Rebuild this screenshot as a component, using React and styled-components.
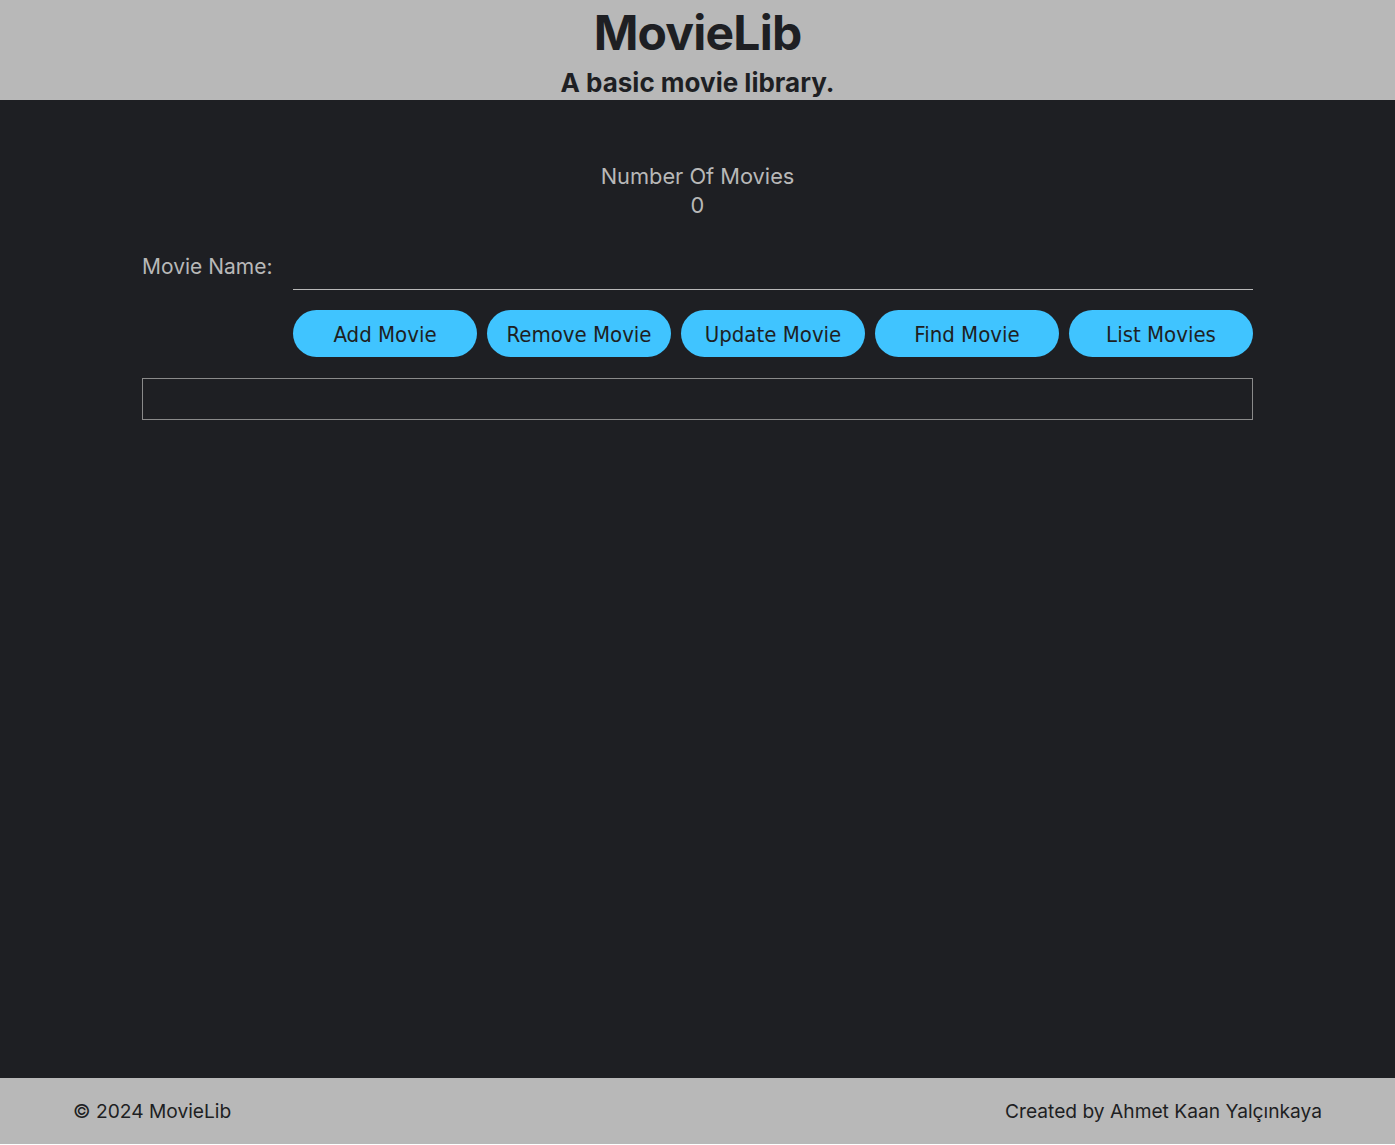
import React from "react";
import styled, { createGlobalStyle } from "styled-components";

const Global = createGlobalStyle`
  html, body { margin: 0; padding: 0; background: #ffffff; }
  body {
    font-family: Inter, "Noto Sans", sans-serif;
  }
  #root { min-height: 1144px; display: flex; flex-direction: column; }
`;

const Header = styled.header`
  background: #b8b8b8;
  height: 100px;
  display: flex;
  flex-direction: column;
  align-items: center;
  color: #1e1f23;
`;

const Title = styled.h1`
  margin: 5px 0 0;
  font-size: 48px;
  line-height: 56px;
  font-weight: 700;
  letter-spacing: -0.8px;
`;

const Subtitle = styled.h2`
  margin: 5px 0 0;
  font-size: 26px;
  line-height: 34px;
  font-weight: 700;
`;

const Main = styled.main`
  flex: 1;
  background: #1e1f23;
  display: flex;
  flex-direction: column;
  align-items: center;
  padding-top: 62px;
`;

const Counter = styled.div`
  color: #b8b8b8;
  font-size: 21.8px;
  line-height: 29px;
  text-align: center;
  font-weight: 400;
`;

const Form = styled.div`
  width: 1111px;
  margin-top: 30px;
  display: grid;
  grid-template-columns: 151px 1fr;
  row-gap: 20px;
`;

const Label = styled.label`
  color: #b8b8b8;
  font-size: 21px;
  line-height: 29px;
  padding-top: 2px;
`;

const Input = styled.input`
  background: transparent;
  border: none;
  border-bottom: 1px solid #b8b8b8;
  height: 40px;
  box-sizing: border-box;
  outline: none;
  color: #b8b8b8;
  font-size: 21px;
`;

const Buttons = styled.div`
  grid-column: 2;
  display: grid;
  grid-template-columns: repeat(5, 1fr);
  gap: 10px;
`;

const Button = styled.button`
  height: 47px;
  border: none;
  border-radius: 24px;
  background: #40c4ff;
  color: #1e1f23;
  font-family: "DejaVu Sans Condensed", "DejaVu Sans", sans-serif;
  font-stretch: condensed;
  font-size: 22px;
  padding: 2px 0 0;
  cursor: pointer;
`;

const Output = styled.div`
  grid-column: 1 / span 2;
  height: 42px;
  margin-top: 1px;
  box-sizing: border-box;
  border: 1px solid #8a8a8a;
`;

const Footer = styled.footer`
  background: #b8b8b8;
  height: 66px;
  display: flex;
  align-items: center;
  justify-content: space-between;
  padding: 0 73px;
  color: #1e1f23;
  font-size: 19.2px;
`;

export default function App() {
  return (
    <>
      <Global />
      <Header>
        <Title>MovieLib</Title>
        <Subtitle>A basic movie library.</Subtitle>
      </Header>
      <Main>
        <Counter>
          Number Of Movies
          <br />0
        </Counter>
        <Form>
          <Label htmlFor="name">Movie Name:</Label>
          <Input id="name" type="text" />
          <Buttons>
            <Button>Add Movie</Button>
            <Button>Remove Movie</Button>
            <Button>Update Movie</Button>
            <Button>Find Movie</Button>
            <Button>List Movies</Button>
          </Buttons>
          <Output />
        </Form>
      </Main>
      <Footer>
        <span>© 2024 MovieLib</span>
        <span>Created by Ahmet Kaan Yalçınkaya</span>
      </Footer>
    </>
  );
}
